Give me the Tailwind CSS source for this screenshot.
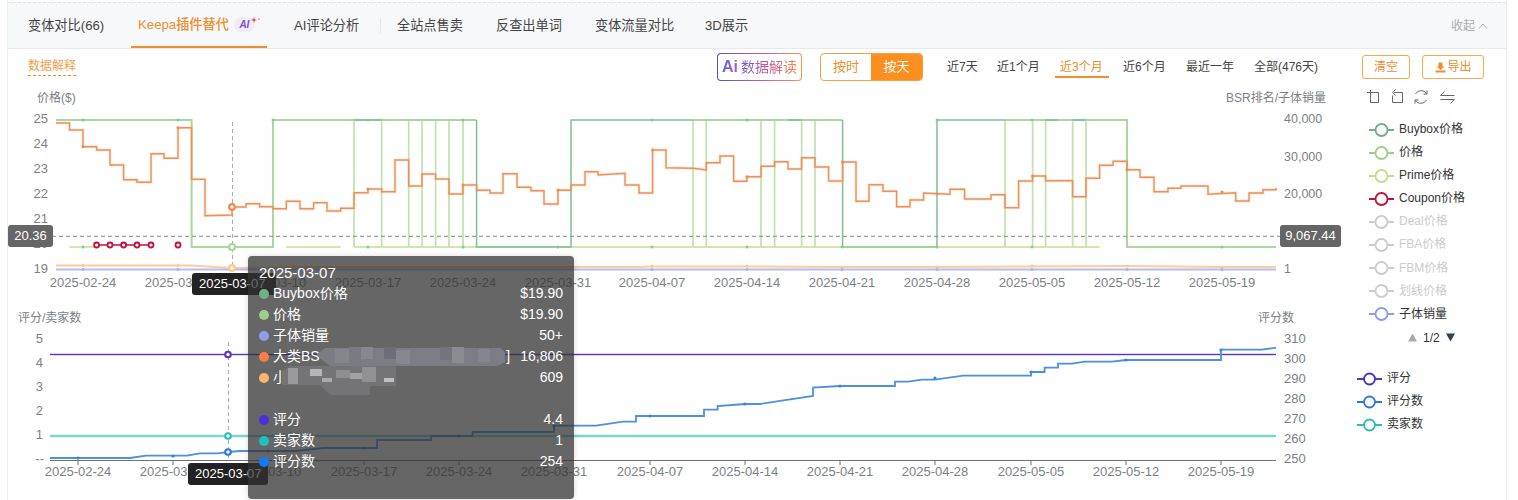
<!DOCTYPE html>
<html lang="zh">
<head>
<meta charset="utf-8">
<script src="https://cdn.jsdelivr.net/npm/@tailwindcss/browser@4"></script>
<title>Keepa</title>
</head>
<body class="bg-white overflow-hidden font-['Liberation_Sans','Noto_Sans_CJK_SC',sans-serif] text-[#333]">
<div class="relative w-[1518px] h-[500px] overflow-hidden">
  <div class="ml-[7px] w-[1500px] h-[500px] border-x border-[#eceef0] pt-[2px]">
    <!-- tabs -->
    <div class="flex items-center h-[46px] bg-[#f7f8fa] border-t border-dashed border-[#dfe1e4] text-[13.2px] text-[#444]">
      <span class="ml-[20px] w-[76px] whitespace-nowrap">变体对比(66)</span>
      <div class="relative ml-[27px] w-[136px] h-full flex items-center pl-[7px] text-[#f08d2d] font-medium border-b-2 border-[#f08d2d] whitespace-nowrap">
        Keepa插件替代
        <span class="ml-[5px] flex items-center justify-center w-[21px] h-[15px] rounded-full bg-[#f1ecf8] text-[10px] font-bold italic text-[#7a55c8]">AI</span>
        <svg class="absolute left-[120px] top-[14px]" width="10" height="8" viewBox="0 0 10 8"><path d="M3 0 L3.8 2.2 L6 3 L3.8 3.8 L3 6 L2.2 3.8 L0 3 L2.2 2.2Z" fill="#ee4455"/><circle cx="8" cy="2" r="0.9" fill="#ee8899"/></svg>
      </div>
      <span class="ml-[27px] w-[86px] whitespace-nowrap">AI评论分析</span>
      <span class="w-px h-[14px] bg-[#e4e6e9]"></span>
      <span class="ml-[16px] w-[66px] whitespace-nowrap">全站点售卖</span>
      <span class="ml-[33px] w-[66px] whitespace-nowrap">反查出单词</span>
      <span class="ml-[33px] w-[80px] whitespace-nowrap">变体流量对比</span>
      <span class="ml-[30px] whitespace-nowrap">3D展示</span>
      <span class="ml-auto mr-[18px] flex items-center gap-[3px] text-[12px] text-[#a9adb3]">收起
        <svg width="10" height="6" viewBox="0 0 10 6"><path d="M1 5.5 L5 1 L9 5.5" fill="none" stroke="#a9adb3" stroke-width="1"/></svg>
      </span>
    </div>
    <!-- toolbar -->
    <div class="flex items-center h-[40px] border-t border-[#e6e8eb] pb-[3px] text-[12px]">
      <span class="ml-[20px] text-[#f0a04a] border-b border-dashed border-[#f08d2d] pb-[2px] leading-[14px]">数据解释</span>
      <div class="ml-[641px] w-[85px] h-[28px] rounded-[4px] p-px bg-linear-to-r from-[#4a55c8] via-[#b95aa8] to-[#f39a3c]">
        <div class="w-full h-full rounded-[3px] bg-white flex items-center justify-center gap-[3px]">
          <span class="text-[16px] font-bold bg-linear-to-r from-[#3f6ae0] to-[#c04fc0] bg-clip-text text-transparent">Ai</span>
          <span class="text-[14px] bg-linear-to-r from-[#6a5ad0] via-[#d0559a] to-[#f08a3c] bg-clip-text text-transparent whitespace-nowrap">数据解读</span>
        </div>
      </div>
      <div class="ml-[18px] flex w-[103px] h-[28px] rounded-[4px] border border-[#f5a142] overflow-hidden text-[13px]">
        <span class="w-[50px] flex items-center justify-center text-[#f08d2d]">按时</span>
        <span class="flex-1 flex items-center justify-center bg-[#fb8f1f] text-white">按天</span>
      </div>
      <div class="ml-[24px] flex h-[28px] items-center text-[#444] whitespace-nowrap">
        <span class="w-[50px]">近7天</span>
        <span class="w-[63px]">近1个月</span>
        <span class="relative w-[63px] text-[#f08d2d]">近3个月<span class="absolute -left-[5px] top-[18px] w-[54px] h-[2px] bg-[#f08d2d]"></span></span>
        <span class="w-[63px]">近6个月</span>
        <span class="w-[68px]">最近一年</span>
        <span class="w-[66px]">全部(476天)</span>
      </div>
      <button class="ml-[42px] w-[48px] h-[24px] rounded-[3px] border border-[#f5a94f] text-[#f08d2d] flex items-center justify-center">清空</button>
      <button class="ml-[12px] w-[62px] h-[24px] rounded-[3px] border border-[#f5a94f] text-[#f08d2d] flex items-center justify-center gap-[2px]">
        <svg width="11" height="11" viewBox="0 0 11 11"><path d="M3.5 0.5h4v4h2L5.5 8 1.5 4.5h2z M0.5 8.5h10v2h-10z" fill="#f08d2d"/></svg>导出
      </button>
    </div>
    <!-- upper chart -->
    <div class="flex h-[212px]">
      <svg class="block shrink-0" width="1345" height="212" viewBox="8 88 1345 212" font-size="13">
        <g fill="#7c7f85">
          <text x="37" y="102" font-size="12">价格($)</text>
          <text x="1226" y="102" font-size="12">BSR排名/子体销量</text>
          <g text-anchor="end"><text x="48" y="123">25</text><text x="48" y="148">24</text><text x="48" y="173">23</text><text x="48" y="198">22</text><text x="48" y="223">21</text><text x="48" y="248">20</text><text x="48" y="273">19</text></g>
          <text x="1284" y="123" font-size="12.5">40,000</text><text x="1284" y="161" font-size="12.5">30,000</text><text x="1284" y="198" font-size="12.5">20,000</text><text x="1284" y="273" font-size="12.5">1</text>
          <g text-anchor="middle"><text x="83" y="287">2025-02-24</text><text x="178" y="287">2025-03-03</text><text x="273" y="287">2025-03-10</text><text x="368" y="287">2025-03-17</text><text x="463" y="287">2025-03-24</text><text x="558" y="287">2025-03-31</text><text x="652" y="287">2025-04-07</text><text x="747" y="287">2025-04-14</text><text x="842" y="287">2025-04-21</text><text x="937" y="287">2025-04-28</text><text x="1032" y="287">2025-05-05</text><text x="1127" y="287">2025-05-12</text><text x="1222" y="287">2025-05-19</text></g>
        </g>
        <!-- lime prime bottom -->
        <path d="M69.5 247H96 M286 247H340.6 M354 247H1099.6" fill="none" stroke="#d3e8a8" stroke-width="2"/>
        <!-- light green verticals -->
        <path d="M354 247V120 M381.6 247V120 M408.7 247V120 M422 247V120 M435.6 247V120 M449 247V120 M463 247V120 M693 247V120 M706.3 247V120 M761 247V120 M774.6 247V120 M801.6 247V120 M815 247V120 M1005 247V120 M1032.6 247V120 M1045.6 247V120 M1072.6 247V120 M1086 247V120" fill="none" stroke="#bfe3ad" stroke-width="1.7"/>
        <!-- price -->
        <path d="M56 120H191.6V247H273V120H476.6 M693 120H842.6 M1005 120H1127V247H1276" fill="none" stroke="#aad8a0" stroke-width="2"/>
        <!-- buybox dark -->
        <path d="M354 120H381.6 M476.6 120V247H571V120H693 M788 120H801.6 M842.6 120V247H937V120H1005 M1045.6 120H1058 M1072.6 120H1086 M490 247H558" fill="none" stroke="#82bd97" stroke-width="1.5"/>
        <path d="M842.6 247H937" fill="none" stroke="#a5d79a" stroke-width="1.5"/>
        <!-- dashed crosshair -->
        <path d="M52 236.3H1282" stroke="#888" stroke-width="1" stroke-dasharray="4 3" fill="none"/>
        <path d="M232.5 122V268" stroke="#aaa" stroke-width="1" stroke-dasharray="4 3" fill="none"/>
        <!-- bottom thin lines -->
        <path d="M56 265.5H178L191 265.5L232 268L300 267L400 267L520 267L640 267L652 266.5H700L760 266.5L830 267L937 267L1032 266.5L1127 266L1222 267H1276" fill="none" stroke="#fbcf98" stroke-width="2"/>
        <path d="M56 269.5H1276" fill="none" stroke="#b6bbf0" stroke-width="2"/>
        <!-- orange price -->
        <path d="M56 123H69.5V130H83V146.7H96.6V150H110V165H123.6V179.7H137V182.3H151V153.7H164V158.3H178V127.7H191.6V179.3H205V215.7L232 215V207H246V203.7H259.6V206.7H273V208.7H286.3V201.3H300V208.7H313.6V202.7H327V211H340.6V208.3H354V192.7H368V189H381.6V191.7H395V160H408.7V186H422V174H435.6V179H449V194H463V185H476.6V190.3H490V193H503V173.7H517V187.3H531V190.7H544V204H558V190.3H571V185H585V171.7H598V175L625 173.3V185H639V193H652.6V150H666V167.7L693 168.3L706.3 170V162.7H720V156H733.6V181.3H747V176.7H761V166.3H774.6V161.7H788V169H801.6V157.7H815V167H828.6V181H842.6V162H856V201.3H869V184.7H883V191.3H896.6V206.7H910V200H923.6V193L950 194.3V189.3H964.6V199H991V194.7H1005V207.7H1018.6V181H1032.6V176H1045.6V180.7H1072.6V196.7H1086V178.3H1099.6V165.3H1113V161.3H1127V169.7H1140V177.3H1154V191.7H1168V188.3H1181V186H1208V194.3L1235.7 192.7V201H1249V193H1263V189.7H1276V187.7" fill="none" stroke="#f2a678" stroke-opacity="0.25" stroke-width="3"/>
        <path d="M56 123H69.5V130H83V146.7H96.6V150H110V165H123.6V179.7H137V182.3H151V153.7H164V158.3H178V127.7H191.6V179.3H205V215.7L232 215V207H246V203.7H259.6V206.7H273V208.7H286.3V201.3H300V208.7H313.6V202.7H327V211H340.6V208.3H354V192.7H368V189H381.6V191.7H395V160H408.7V186H422V174H435.6V179H449V194H463V185H476.6V190.3H490V193H503V173.7H517V187.3H531V190.7H544V204H558V190.3H571V185H585V171.7H598V175L625 173.3V185H639V193H652.6V150H666V167.7L693 168.3L706.3 170V162.7H720V156H733.6V181.3H747V176.7H761V166.3H774.6V161.7H788V169H801.6V157.7H815V167H828.6V181H842.6V162H856V201.3H869V184.7H883V191.3H896.6V206.7H910V200H923.6V193L950 194.3V189.3H964.6V199H991V194.7H1005V207.7H1018.6V181H1032.6V176H1045.6V180.7H1072.6V196.7H1086V178.3H1099.6V165.3H1113V161.3H1127V169.7H1140V177.3H1154V191.7H1168V188.3H1181V186H1208V194.3L1235.7 192.7V201H1249V193H1263V189.7H1276V187.7" fill="none" stroke="#ee8f58" stroke-width="1.4"/>
        <!-- coupon -->
        <path d="M96.6 245H151" stroke="#c0123c" stroke-width="1.5"/>
        <g fill="#fff" stroke="#c0123c" stroke-width="1.8"><circle cx="96.6" cy="245" r="2.5"/><circle cx="110" cy="245" r="2.5"/><circle cx="123.6" cy="245" r="2.5"/><circle cx="137" cy="245" r="2.5"/><circle cx="151" cy="245" r="2.5"/><circle cx="178" cy="245" r="2.5"/></g>
        <!-- tick dots -->
        <g fill="#8cc79a"><circle cx="83" cy="120" r="1.5"/><circle cx="178" cy="120" r="1.5"/><circle cx="273" cy="120" r="1.5"/><circle cx="368" cy="120" r="1.5"/><circle cx="463" cy="120" r="1.5"/><circle cx="652" cy="120" r="1.5"/><circle cx="747" cy="120" r="1.5"/><circle cx="937" cy="120" r="1.5"/><circle cx="1032" cy="120" r="1.5"/>
          <circle cx="83" cy="247" r="1.5"/><circle cx="368" cy="247" r="1.5"/><circle cx="463" cy="247" r="1.5"/><circle cx="558" cy="247" r="1.5"/><circle cx="652" cy="247" r="1.5"/><circle cx="747" cy="247" r="1.5"/><circle cx="842" cy="247" r="1.5"/><circle cx="937" cy="247" r="1.5"/><circle cx="1032" cy="247" r="1.5"/><circle cx="1222" cy="247" r="1.5"/></g>
        <g fill="#ee8a52"><circle cx="83" cy="146.7" r="1.5"/><circle cx="178" cy="127.7" r="1.5"/><circle cx="368" cy="189" r="1.5"/><circle cx="463" cy="185" r="1.5"/><circle cx="558" cy="190" r="1.5"/><circle cx="652.6" cy="150" r="1.5"/><circle cx="747" cy="176.7" r="1.5"/><circle cx="842.6" cy="162" r="1.5"/><circle cx="937" cy="194" r="1.5"/><circle cx="1032.6" cy="176" r="1.5"/><circle cx="1127" cy="169.7" r="1.5"/><circle cx="1222" cy="192" r="1.5"/></g>
        <g fill="#fbc98a"><circle cx="83" cy="265.5" r="1.5"/><circle cx="178" cy="265.5" r="1.5"/><circle cx="652" cy="266" r="1.5"/><circle cx="747" cy="266" r="1.5"/><circle cx="842" cy="267" r="1.5"/><circle cx="937" cy="267" r="1.5"/><circle cx="1032" cy="266" r="1.5"/><circle cx="1127" cy="266" r="1.5"/><circle cx="1222" cy="267" r="1.5"/></g>
        <g fill="#aab0ee"><circle cx="83" cy="269.5" r="1.5"/><circle cx="178" cy="269.5" r="1.5"/><circle cx="652" cy="269.5" r="1.5"/><circle cx="747" cy="269.5" r="1.5"/><circle cx="842" cy="269.5" r="1.5"/><circle cx="937" cy="269.5" r="1.5"/><circle cx="1032" cy="269.5" r="1.5"/><circle cx="1127" cy="269.5" r="1.5"/><circle cx="1222" cy="269.5" r="1.5"/></g>
        <!-- hover markers -->
        <circle cx="232" cy="207" r="2.8" fill="#fff" stroke="#ee8a52" stroke-width="2.2"/>
        <circle cx="232" cy="247" r="3" fill="#fff" stroke="#a5d79a" stroke-width="2.2"/>
        <circle cx="232" cy="268" r="2.8" fill="#fff" stroke="#fbc98a" stroke-width="2.2"/>
      </svg>
      <!-- legend upper -->
      <div class="flex flex-col">
        <div class="flex items-center h-[18px] ml-[13px]">
          <svg width="90" height="16" viewBox="0 0 90 16" fill="none" stroke="#666" stroke-width="1">
            <path d="M1 4.5H12.5V14.5H4.5V2"/>
            <path d="M28 4.5H36.5V14.5H26.5V7.5M29.5 1.5L26.5 4.5L29.5 7.5"/>
            <path d="M60.5 5.5A6.5 6.5 0 0 0 49.5 6M49.5 12.5A6.5 6.5 0 0 0 60.5 12M61 2.5V6H57.5M49 15.5V12H52.5"/>
            <path d="M74.5 7.5H88.5M74.5 7.5L78.5 3.5M74.5 11.5H88.5M88.5 11.5L84.5 15.5"/>
          </svg>
        </div>
        <div class="mt-[14px] ml-[16px] flex flex-col text-[12px] leading-[23.1px] whitespace-nowrap">
          <div class="flex items-center gap-[5px]"><svg width="25" height="16" viewBox="0 0 25 16"><path d="M0 8H25" stroke="#6fb18a" stroke-width="2"/><circle cx="12.5" cy="8" r="6" fill="#fff" stroke="#6fb18a" stroke-width="1.8"/></svg>Buybox价格</div>
          <div class="flex items-center gap-[5px]"><svg width="25" height="16" viewBox="0 0 25 16"><path d="M0 8H25" stroke="#9ccf8d" stroke-width="2"/><circle cx="12.5" cy="8" r="6" fill="#fff" stroke="#9ccf8d" stroke-width="1.8"/></svg>价格</div>
          <div class="flex items-center gap-[5px]"><svg width="25" height="16" viewBox="0 0 25 16"><path d="M0 8H25" stroke="#c5de8c" stroke-width="2"/><circle cx="12.5" cy="8" r="6" fill="#fff" stroke="#c5de8c" stroke-width="1.8"/></svg>Prime价格</div>
          <div class="flex items-center gap-[5px]"><svg width="25" height="16" viewBox="0 0 25 16"><path d="M0 8H25" stroke="#c0123c" stroke-width="2"/><circle cx="12.5" cy="8" r="6" fill="#fff" stroke="#c0123c" stroke-width="1.8"/></svg>Coupon价格</div>
          <div class="flex items-center gap-[5px] text-[#ccc]"><svg width="25" height="16" viewBox="0 0 25 16"><path d="M0 8H25" stroke="#ccc" stroke-width="2"/><circle cx="12.5" cy="8" r="6" fill="#fff" stroke="#ccc" stroke-width="1.8"/></svg>Deal价格</div>
          <div class="flex items-center gap-[5px] text-[#ccc]"><svg width="25" height="16" viewBox="0 0 25 16"><path d="M0 8H25" stroke="#ccc" stroke-width="2"/><circle cx="12.5" cy="8" r="6" fill="#fff" stroke="#ccc" stroke-width="1.8"/></svg>FBA价格</div>
          <div class="flex items-center gap-[5px] text-[#ccc]"><svg width="25" height="16" viewBox="0 0 25 16"><path d="M0 8H25" stroke="#ccc" stroke-width="2"/><circle cx="12.5" cy="8" r="6" fill="#fff" stroke="#ccc" stroke-width="1.8"/></svg>FBM价格</div>
          <div class="flex items-center gap-[5px] text-[#ccc]"><svg width="25" height="16" viewBox="0 0 25 16"><path d="M0 8H25" stroke="#ccc" stroke-width="2"/><circle cx="12.5" cy="8" r="6" fill="#fff" stroke="#ccc" stroke-width="1.8"/></svg>划线价格</div>
          <div class="flex items-center gap-[5px]"><svg width="25" height="16" viewBox="0 0 25 16"><path d="M0 8H25" stroke="#8f9ee8" stroke-width="2"/><circle cx="12.5" cy="8" r="6" fill="#fff" stroke="#8f9ee8" stroke-width="1.8"/></svg>子体销量</div>
        </div>
        <div class="ml-[55px] flex items-center gap-[6px] text-[12px] leading-[24px]">
          <svg width="9" height="9" viewBox="0 0 9 9"><path d="M4.5 0.5L9 8.5H0Z" fill="#aaa"/></svg>
          <span>1/2</span>
          <svg width="9" height="9" viewBox="0 0 9 9"><path d="M0 0.5H9L4.5 8.5Z" fill="#2f4554"/></svg>
        </div>
      </div>
    </div>
    <!-- lower chart -->
    <div class="flex h-[200px]">
      <svg class="block shrink-0" width="1345" height="200" viewBox="8 300 1345 200" font-size="13">
        <g fill="#7c7f85">
          <text x="18" y="322" font-size="12">评分/卖家数</text>
          <text x="1258" y="322" font-size="12">评分数</text>
          <g text-anchor="end"><text x="43" y="343">5</text><text x="43" y="367">4</text><text x="43" y="391">3</text><text x="43" y="415">2</text><text x="43" y="439">1</text><text x="44" y="463">--</text></g>
          <text x="1284" y="343">310</text><text x="1284" y="363">300</text><text x="1284" y="383">290</text><text x="1284" y="403">280</text><text x="1284" y="423">270</text><text x="1284" y="443">260</text><text x="1284" y="463">250</text>
          <g text-anchor="middle"><text x="78" y="476">2025-02-24</text><text x="173" y="476">2025-03-03</text><text x="268" y="476">2025-03-10</text><text x="364" y="476">2025-03-17</text><text x="459" y="476">2025-03-24</text><text x="554" y="476">2025-03-31</text><text x="650" y="476">2025-04-07</text><text x="745" y="476">2025-04-14</text><text x="840" y="476">2025-04-21</text><text x="935" y="476">2025-04-28</text><text x="1031" y="476">2025-05-05</text><text x="1126" y="476">2025-05-12</text><text x="1221" y="476">2025-05-19</text></g>
        </g>
        <path d="M50 460.5H1276" stroke="#6e7079" stroke-width="1" fill="none"/>
        <path d="M78 460V465M173 460V465M268 460V465M364 460V465M459 460V465M554 460V465M650 460V465M745 460V465M840 460V465M935 460V465M1031 460V465M1126 460V465M1221 460V465" stroke="#6e7079" stroke-width="1" fill="none"/>
        <path d="M228.5 342V460" stroke="#aaa" stroke-width="1" stroke-dasharray="4 3" fill="none"/>
        <path d="M50 354.5H1276" stroke="#dcd4f4" stroke-width="3" fill="none"/>
        <path d="M50 354.5H1276" stroke="#5a36c8" stroke-width="1.1" fill="none"/>
        <path d="M50 436H1276" stroke="#7fd4d4" stroke-width="2.4" fill="none"/>
        <path d="M50 458H130L146 455.7H187L200 453.3H218L228 452L240 451H296L323 448H377V440H431V436H472.6V432H554V425.7H596L623 421.7H636V416H704V409.7H717.6V406L745 404H760L813 396V387.7L840 386H895V381.7H908L922 379.7H935L963 375.7H1031V372H1044.6V367.7H1058V363.7H1072L1085 361.7H1112L1126 360H1221V349.7H1262L1276 347.7" fill="none" stroke="#4d90dc" stroke-width="1.8"/>
        <g fill="#3b82e0"><circle cx="78" cy="458" r="1.6"/><circle cx="173" cy="456" r="1.6"/><circle cx="268" cy="451" r="1.6"/><circle cx="364" cy="448" r="1.6"/><circle cx="459" cy="436" r="1.6"/><circle cx="554" cy="426" r="1.6"/><circle cx="650" cy="416" r="1.6"/><circle cx="745" cy="404" r="1.6"/><circle cx="840" cy="386" r="1.6"/><circle cx="935" cy="378" r="1.6"/><circle cx="1031" cy="372" r="1.6"/><circle cx="1126" cy="360" r="1.6"/><circle cx="1221" cy="350" r="1.6"/></g>
        <circle cx="228" cy="354.5" r="2.8" fill="#fff" stroke="#5a36c8" stroke-width="2.1"/>
        <circle cx="228" cy="436" r="2.8" fill="#fff" stroke="#2cbcbc" stroke-width="2.1"/>
        <circle cx="228" cy="452" r="2.8" fill="#fff" stroke="#2b78e4" stroke-width="2.1"/>
      </svg>
      <div class="mt-[67px] ml-[4px] flex flex-col text-[12px] leading-[23px] whitespace-nowrap">
        <div class="flex items-center gap-[5px]"><svg width="25" height="16" viewBox="0 0 25 16"><path d="M0 8H25" stroke="#5a36c8" stroke-width="2"/><circle cx="12.5" cy="8" r="5.5" fill="#fff" stroke="#4a2fc0" stroke-width="1.8"/></svg>评分</div>
        <div class="flex items-center gap-[5px]"><svg width="25" height="16" viewBox="0 0 25 16"><path d="M0 8H25" stroke="#2b78e4" stroke-width="2"/><circle cx="12.5" cy="8" r="5.5" fill="#fff" stroke="#2b78e4" stroke-width="1.8"/></svg>评分数</div>
        <div class="flex items-center gap-[5px]"><svg width="25" height="16" viewBox="0 0 25 16"><path d="M0 8H25" stroke="#2cbcbc" stroke-width="2"/><circle cx="12.5" cy="8" r="5.5" fill="#fff" stroke="#2cbcbc" stroke-width="1.8"/></svg>卖家数</div>
      </div>
    </div>
  </div>

  <!-- axis pointer labels -->
  <div class="absolute left-[8px] top-[225px] w-[45px] h-[22px] rounded-[3px] bg-[#666] text-white text-[13px] leading-[22px] text-center">20.36</div>
  <div class="absolute left-[1280px] top-[225px] w-[61px] h-[22px] rounded-[3px] bg-[#666] text-white text-[13px] leading-[22px] text-center">9,067.44</div>
  <div class="absolute left-[192px] top-[273px] w-[84px] h-[22px] rounded-[3px] bg-[#222] text-white text-[13px] leading-[22px] pl-[7px]">2025-03-07</div>
  <div class="absolute left-[188px] top-[463px] w-[80px] h-[22px] rounded-[3px] bg-[#222] text-white text-[13px] leading-[22px] pl-[7px]">2025-03-07</div>

  <!-- tooltip -->
  <div class="absolute left-[248px] top-[256px] w-[326px] h-[243px] rounded-[4px] bg-[#333]/75 text-white text-[14px] leading-[21px] px-[11px] pt-[6px] shadow-[0_0_6px_rgba(0,0,0,0.15)]">
    <div class="text-[15px]">2025-03-07</div>
    <div class="flex items-center"><span class="w-[10px] h-[10px] rounded-full bg-[#6fb18a] mr-[4px]"></span>Buybox价格<span class="ml-auto">$19.90</span></div>
    <div class="flex items-center"><span class="w-[10px] h-[10px] rounded-full bg-[#9ccf8d] mr-[4px]"></span>价格<span class="ml-auto">$19.90</span></div>
    <div class="flex items-center"><span class="w-[10px] h-[10px] rounded-full bg-[#8f9ee8] mr-[4px]"></span>子体销量<span class="ml-auto">50+</span></div>
    <div class="flex items-center"><span class="w-[10px] h-[10px] rounded-full bg-[#fb7d45] mr-[4px]"></span>大类BS<span class="ml-auto mr-[10px]">]</span><span>16,806</span></div>
    <div class="flex items-center"><span class="w-[10px] h-[10px] rounded-full bg-[#fbb469] mr-[4px]"></span>小<span class="ml-auto">609</span></div>
    <div class="h-[21px]"></div>
    <div class="flex items-center"><span class="w-[10px] h-[10px] rounded-full bg-[#4a2fe0] mr-[4px]"></span>评分<span class="ml-auto">4.4</span></div>
    <div class="flex items-center"><span class="w-[10px] h-[10px] rounded-full bg-[#1cc0c0] mr-[4px]"></span>卖家数<span class="ml-auto">1</span></div>
    <div class="flex items-center"><span class="w-[10px] h-[10px] rounded-full bg-[#0f7bff] mr-[4px]"></span>评分数<span class="ml-auto">254</span></div>
    <!-- mosaic -->
    <svg class="absolute left-0 top-0" width="326" height="243" viewBox="248 256 326 243">
      <path d="M316 355L325 348H500L505 352V362L498 366H400L390 366H330Z" fill="#7c7c84"/>
      <g>
        <rect x="335" y="349" width="14" height="14" fill="#85858c"/><rect x="349" y="347" width="12" height="18" fill="#7a7a82"/><rect x="361" y="347" width="12" height="12" fill="#87878e"/><rect x="384" y="347" width="12" height="12" fill="#6e6e78"/><rect x="396" y="350" width="14" height="14" fill="#878790"/><rect x="440" y="347" width="12" height="13" fill="#74747d"/><rect x="452" y="347" width="12" height="16" fill="#8b8b92"/><rect x="478" y="349" width="12" height="13" fill="#85858c"/>
        <path d="M282 371L290 366H396V386H370V395H330L320 385H282Z" fill="#747476"/>
        <rect x="288" y="368" width="10" height="16" fill="#9a9a9c"/><rect x="310" y="369" width="12" height="7" fill="#b5b5b7"/><rect x="336" y="370" width="14" height="8" fill="#8f8f91"/><rect x="350" y="373" width="12" height="6" fill="#a2a2a4"/><rect x="362" y="367" width="14" height="15" fill="#919193"/><rect x="322" y="378" width="10" height="4" fill="#a9a9ab"/><rect x="384" y="378" width="10" height="4" fill="#c0c0c2"/>
      </g>
    </svg>
  </div>
</div>
</body>
</html>
